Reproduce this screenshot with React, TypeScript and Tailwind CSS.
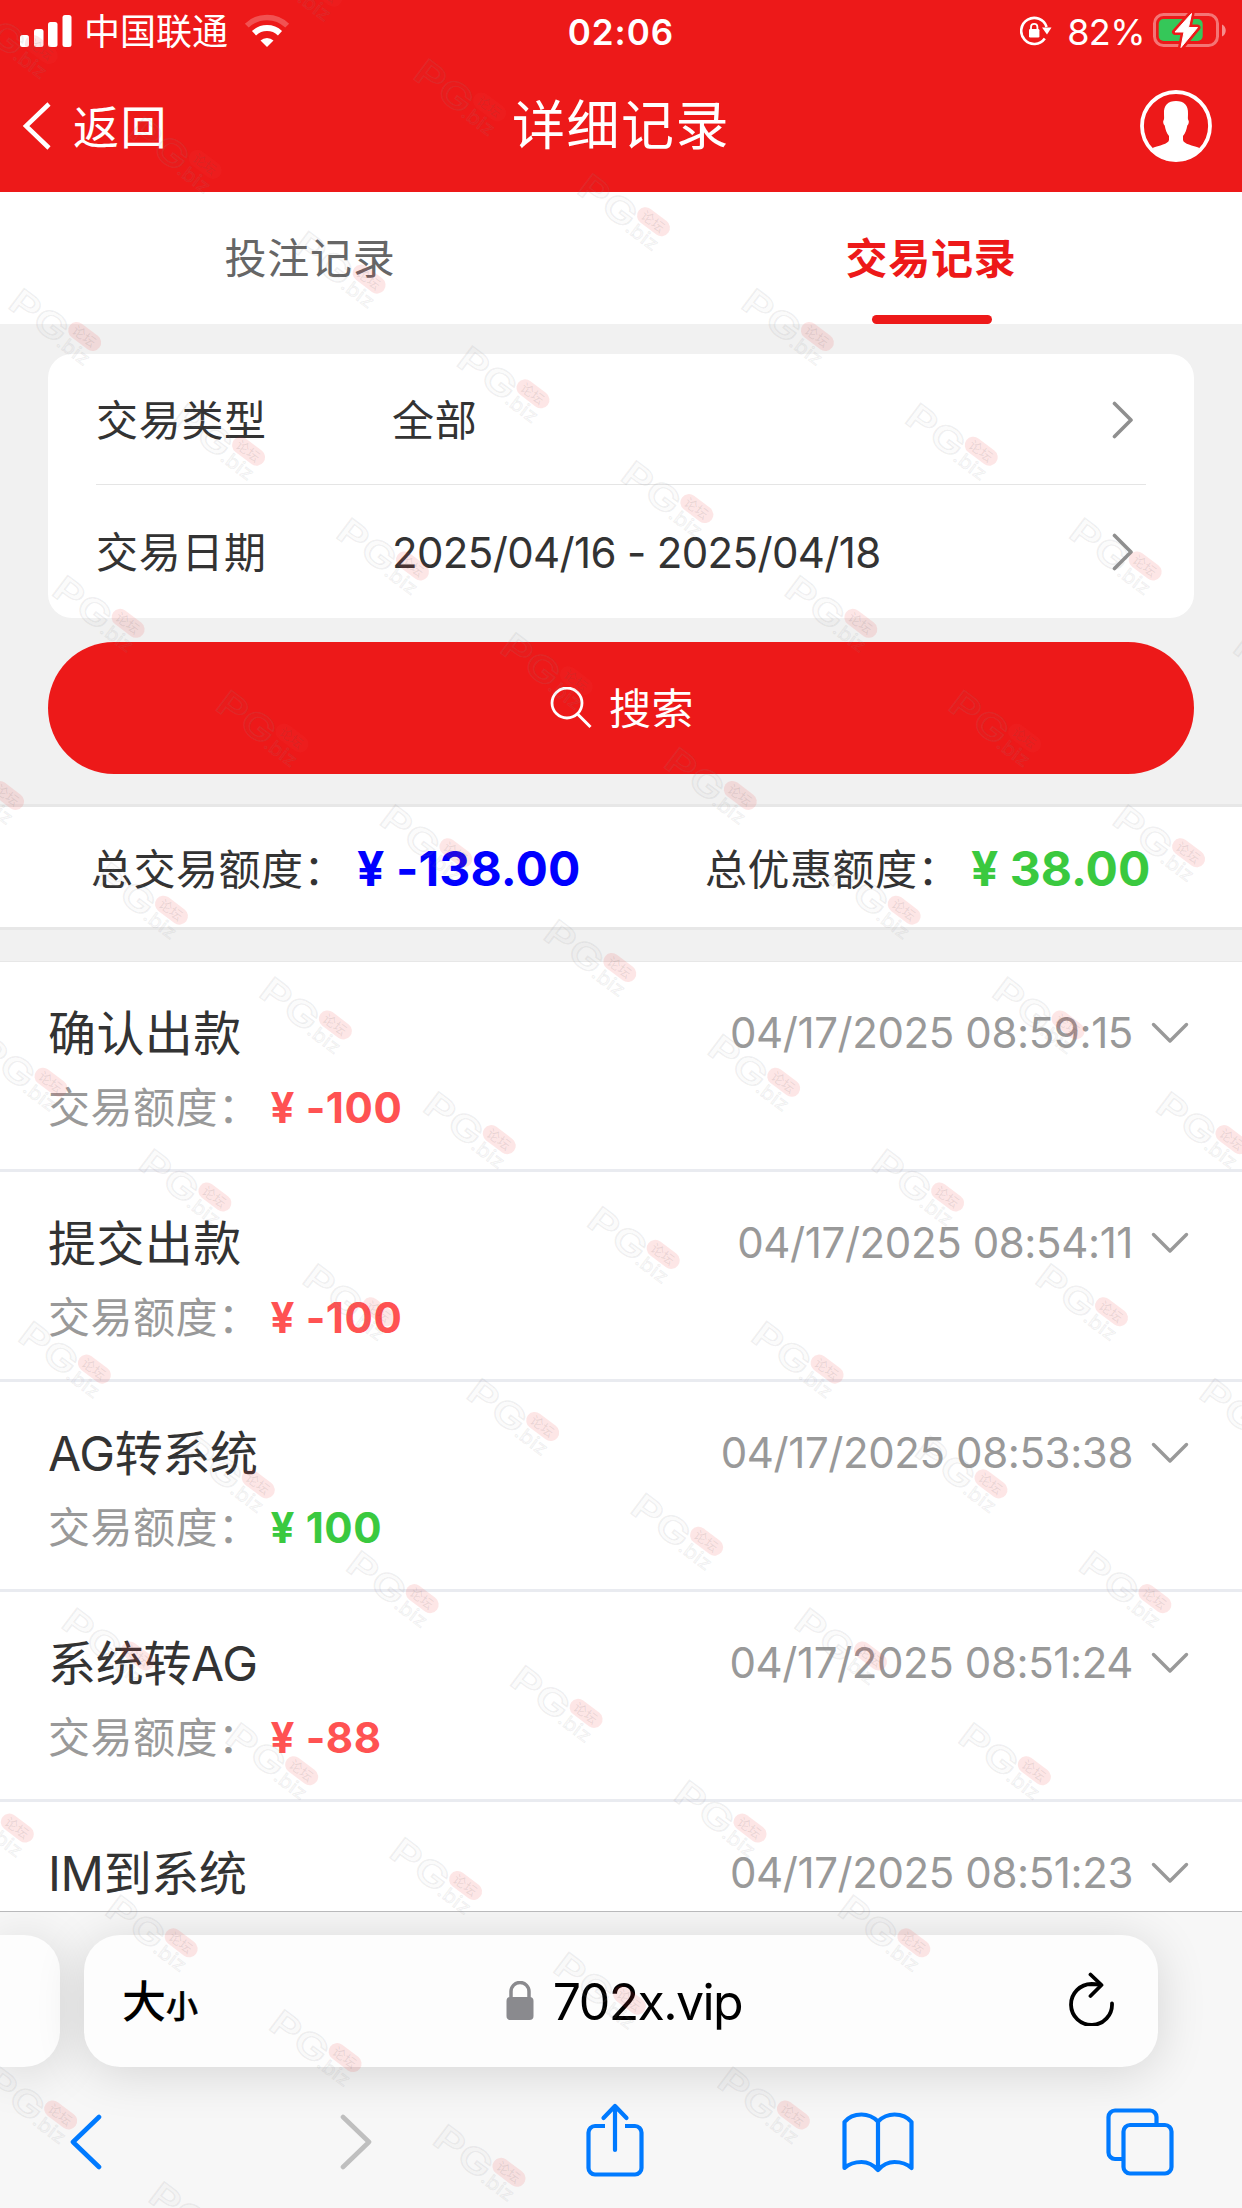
import React from "react";

type Tone = "red" | "green";

type RecordItem = {
  title: string;
  time: string;
  amount: string;
  tone: Tone;
};

const records: RecordItem[] = [
  { title: "确认出款", time: "04/17/2025 08:59:15", amount: "-100", tone: "red" },
  { title: "提交出款", time: "04/17/2025 08:54:11", amount: "-100", tone: "red" },
  { title: "AG转系统", time: "04/17/2025 08:53:38", amount: "100", tone: "green" },
  { title: "系统转AG", time: "04/17/2025 08:51:24", amount: "-88", tone: "red" },
  { title: "IM到系统", time: "04/17/2025 08:51:23", amount: "-100", tone: "red" },
];

function SignalIcon() {
  return (
    <svg width="52" height="34" viewBox="0 0 52 34" fill="#fff">
      <rect x="0" y="21" width="9" height="12" rx="2.5" />
      <rect x="14" y="15" width="9.5" height="18" rx="2.5" />
      <rect x="28" y="8" width="9.5" height="25" rx="2.5" />
      <rect x="42.5" y="1" width="9" height="32" rx="2.5" />
    </svg>
  );
}

function WifiIcon() {
  return (
    <svg width="46" height="34" viewBox="0 0 46 34" fill="none">
      <path d="M2.8 11.6 A29 29 0 0 1 43.2 11.6" stroke="#fff" strokeOpacity="0.25" strokeWidth="5.5" />
      <path d="M10 19.2 A19 19 0 0 1 36 19.2" stroke="#fff" strokeWidth="6" />
      <path d="M23 33 L16.5 26.500 A9.500 9.500 0 0 1 29.500 26.500 Z" fill="#fff" />
    </svg>
  );
}

function RotationLockIcon() {
  return (
    <svg width="32" height="30" viewBox="0 0 32 30" fill="none">
      <path d="M24.800 22.500 A13 13 0 1 1 26.600 11" stroke="#fff" strokeWidth="2.600" />
      <path d="M22 11.500 H31.500 L27 18.500 Z" fill="#fff" />
      <rect x="9" y="13" width="10.400" height="8.500" rx="1.200" fill="#fff" />
      <path d="M11 13.500 V11 A3.200 3.200 0 0 1 17.400 11 V13.500" stroke="#fff" strokeWidth="1.800" />
    </svg>
  );
}

function BatteryIcon() {
  return (
    <svg width="74" height="36" viewBox="0 0 74 36" fill="none">
      <rect x="1.500" y="1.500" width="63" height="31" rx="9" stroke="#fff" strokeOpacity="0.4" strokeWidth="3" />
      <path d="M69 11.500 C74 13.500 74 21.500 69 23.500 Z" fill="#fff" fillOpacity="0.5" />
      <rect x="5.700" y="6" width="44" height="22" rx="5" fill="#35c759" />
      <path d="M38.500 0.500 L22 19 H31 L28 34.500 L44.500 14.500 H35.500 Z" fill="#fff" stroke="#ed1919" strokeWidth="6" strokeLinejoin="round" />
      <path d="M38.500 0.500 L22 19 H31 L28 34.500 L44.500 14.500 H35.500 Z" fill="#fff" stroke="#fff" strokeWidth="1" strokeLinejoin="round" />
    </svg>
  );
}

function AvatarIcon() {
  return (
    <svg width="72" height="72" viewBox="0 0 72 72" fill="none">
      <circle cx="36" cy="36" r="34" stroke="#fff" strokeWidth="3.800" />
      <path
        d="M36 11 C44 11 48.500 15 48 24 C48 27 47.600 29 48.300 30 C49.500 31.500 48.500 34.500 47.300 35.500 C46.500 40 45.500 43 43 46 V50 C43.500 54 53 55.500 59.500 58 A33 33 0 0 1 46 70.500 H26 A33 33 0 0 1 12.500 58 C19 55.500 28.500 54 29 50 V46 C26.500 43 25.500 40 24.700 35.500 C23.500 34.500 22.500 31.500 23.700 30 C24.400 29 24 27 24 24 C23.500 15 28 11 36 11 Z"
        fill="#fff"
      />
    </svg>
  );
}

function Chevron({ dir, color }: { dir: "right" | "down"; color: string }) {
  return dir === "right" ? (
    <svg width="22" height="38" viewBox="0 0 22 38" fill="none">
      <path d="M2.500 2.500 L19 19 L2.500 35.500" stroke={color} strokeWidth="3.600" strokeLinecap="round" strokeLinejoin="round" />
    </svg>
  ) : (
    <svg width="38" height="22" viewBox="0 0 38 22" fill="none">
      <path d="M2.500 2.500 L19 19 L35.500 2.500" stroke={color} strokeWidth="3.400" strokeLinecap="round" strokeLinejoin="round" />
    </svg>
  );
}

function StatusBar() {
  return (
    <div className="mb-0.5 grid h-[62px] grid-cols-3 items-center px-5 text-white">
      <div className="flex items-center">
        <SignalIcon />
        <span className="ml-3 pt-0.5 text-[36px] leading-[50px]">中国联通</span>
        <span className="ml-4 flex">
          <WifiIcon />
        </span>
      </div>
      <div className="pt-0.5 text-center text-[35px] font-semibold leading-[50px] tracking-[1px]">02:06</div>
      <div className="-mr-[5px] flex items-center justify-end">
        <RotationLockIcon />
        <span className="ml-[15px] mr-2 pt-0.5 text-[36px] leading-[50px] tracking-[-0.6px]">82%</span>
        <BatteryIcon />
      </div>
    </div>
  );
}

function Header() {
  return (
    <header className="h-48 bg-[#ed1919]">
      <StatusBar />
      <div className="grid h-[124px] grid-cols-3 items-center px-[22px] text-white">
        <div className="flex items-center">
          <svg width="30" height="50" viewBox="0 0 30 50" fill="none">
            <path d="M27 3 L4 25 L27 47" stroke="#fff" strokeWidth="4.500" />
          </svg>
          <span className="ml-[21px] pt-0.5 text-[46px] leading-[60px] tracking-[1.5px]">返回</span>
        </div>
        <h1 className="text-center text-[53px] leading-[70px] tracking-[1.5px]">详细记录</h1>
        <div className="mr-2 flex justify-end">
          <AvatarIcon />
        </div>
      </div>
    </header>
  );
}

function Tabs() {
  return (
    <nav className="grid h-[132px] grid-cols-2 bg-white text-[42px] leading-[60px] tracking-[0.7px]">
      <div className="flex items-center justify-center pr-px pt-0.5 text-[#666666]">投注记录</div>
      <div className="flex flex-col items-center justify-between pt-[37px]">
        <span className="pr-px font-bold text-[#ed1919]">交易记录</span>
        <span className="h-[9px] w-[120px] rounded-full bg-[#ed1919]" />
      </div>
    </nav>
  );
}

function FilterRow({ label, value, spacing }: { label: string; value: string; spacing: string }) {
  return (
    <div className="flex h-[131px] items-center">
      <span className="w-[296px] pt-0.5 tracking-[0.7px]">{label}</span>
      <span className={spacing}>{value}</span>
      <span className="ml-auto mr-3">
        <Chevron dir="right" color="#8f8f8f" />
      </span>
    </div>
  );
}

function Filters() {
  return (
    <section className="h-[480px] bg-[#f1f1f1] px-12 pt-[30px]">
      <div className="h-[264px] rounded-3xl bg-white px-12 text-[42px] leading-[60px] text-[#333333]">
        <FilterRow label="交易类型" value="全部" spacing="pt-0.5 tracking-[0.7px]" />
        <div className="-mt-px mb-px h-px bg-[#e5e5e5]" />
        <FilterRow label="交易日期" value="2025/04/16 - 2025/04/18" spacing="pt-0.5 tracking-[-0.65px]" />
      </div>
      <button className="mt-6 flex h-[132px] w-full items-center justify-center rounded-full bg-[#ed1919] pl-0.5 text-[42px] leading-[60px] text-white">
        <svg width="42" height="42" viewBox="0 0 42 42" fill="none">
          <circle cx="17" cy="16" r="15" stroke="#fff" strokeWidth="2.800" />
          <path d="M27.500 27 L40.500 40" stroke="#fff" strokeWidth="3" />
        </svg>
        <span className="ml-[17px] pt-0.5 tracking-[0.5px]">搜索</span>
      </button>
    </section>
  );
}

function Summary() {
  return (
    <section className="grid h-[126px] grid-cols-2 border-y-[3px] border-[#e7e7e7] bg-white text-[42px] leading-[60px] text-[#333333]">
      <div className="flex items-center pl-[91px] pt-1.5">
        <span className="tracking-[0.5px]">总交易额度：</span>
        <span className="ml-[11px] pb-0.5 text-[48px] font-bold tracking-[0.1px] text-[#0000ff]">¥ -138.00</span>
      </div>
      <div className="flex items-center pl-[84px] pt-1.5">
        <span className="tracking-[0.5px]">总优惠额度：</span>
        <span className="ml-[11px] pb-0.5 text-[48px] font-bold text-[#3ac93f]">¥ 38.00</span>
      </div>
    </section>
  );
}

function RecordRow({ item }: { item: RecordItem }) {
  const hasLatin = /[A-Z]/.test(item.title);
  return (
    <li className="h-[210px] border-b-[3px] border-[#e9ebf0] px-12 pt-9">
      <div className="flex h-[70px] items-center justify-between">
        <span
          className={
            hasLatin
              ? "pt-0.5 text-[48px] leading-[70px] tracking-[-0.3px] text-[#333333]"
              : "pt-0.5 text-[48px] leading-[70px] tracking-[0.4px] text-[#333333]"
          }
        >
          {item.title}
        </span>
        <span className="flex items-center gap-[18px] pr-[5px]">
          <span className="text-[42px] leading-[60px] tracking-[-0.4px] text-[#999999]">{item.time}</span>
          <Chevron dir="down" color="#999999" />
        </span>
      </div>
      <div className="mt-1.5 flex items-center text-[42px] leading-[66px]">
        <span className="pt-px tracking-[0.5px] text-[#999999]">交易额度：</span>
        <span
          className={
            item.tone === "red"
              ? "ml-2.5 font-bold tracking-[0.6px] text-[#ff5252]"
              : "ml-2.5 font-bold tracking-[0.6px] text-[#3ac93f]"
          }
        >
          ¥ {item.amount}
        </span>
      </div>
    </li>
  );
}

function BrowserBar() {
  return (
    <footer className="h-[297px] overflow-hidden border-t border-[#b9b9bb] bg-[#f7f7f7]">
      <div className="mt-[23px] flex gap-6">
        <div className="h-[132px] w-[60px] rounded-r-[36px] bg-[#fdfdfd] shadow-[0_6px_50px_rgba(0,0,0,0.14)]" />
        <div className="grid h-[132px] w-[1074px] grid-cols-[1fr_auto_1fr] items-center rounded-[36px] bg-[#fdfdfd] px-[38px] text-black shadow-[0_6px_50px_rgba(0,0,0,0.14)]">
          <div className="flex items-baseline pt-1.5 font-medium leading-[60px]">
            <span className="text-[44px]">大</span>
            <span className="text-[32px] [-webkit-text-stroke:0.5px_#000]">小</span>
          </div>
          <div className="flex items-center pl-1.5">
            <svg width="28" height="40" viewBox="0 0 28 40" fill="none">
              <rect x="0.500" y="16" width="27" height="23" rx="4" fill="#8a8a8e" />
              <path d="M5 18 V10.500 A9 9 0 0 1 23 10.500 V18" stroke="#8a8a8e" strokeWidth="3.500" />
            </svg>
            <span className="ml-[19px] pt-0.5 text-[50px] leading-[66px] tracking-[-1.6px]">702x.vip</span>
          </div>
          <div className="flex justify-end pb-1 pr-[5px]">
            <svg width="46" height="54" viewBox="0 0 46 54" fill="none" stroke="#000" strokeWidth="3.800" strokeLinecap="round" strokeLinejoin="round">
              <path d="M43 31.500 A20.500 20.500 0 1 1 22.500 12 L31 12.500" />
              <path d="M21.500 2.500 L32.500 13 L21.500 24" />
            </svg>
          </div>
        </div>
      </div>
      <div className="flex h-[140px] items-center pl-[69px] pt-2.5">
        <svg width="34" height="56" viewBox="0 0 34 56" fill="none">
          <path d="M30 3 L4 28 L30 53" stroke="#007aff" strokeWidth="4.600" strokeLinecap="round" strokeLinejoin="round" />
        </svg>
        <svg className="ml-[236px]" width="34" height="56" viewBox="0 0 34 56" fill="none">
          <path d="M4 3 L30 28 L4 53" stroke="#bfbfbf" strokeWidth="4.600" strokeLinecap="round" strokeLinejoin="round" />
        </svg>
        <svg className="mb-1 ml-[213px]" width="58" height="74" viewBox="0 0 58 74" fill="none" stroke="#007aff" strokeWidth="4.200">
          <path d="M19 23 H9 A6.500 6.500 0 0 0 2.500 29.500 V65 A6.500 6.500 0 0 0 9 71.500 H49 A6.500 6.500 0 0 0 55.500 65 V29.500 A6.500 6.500 0 0 0 49 23 H39" />
          <path d="M29 3 V47 M17.500 15 L29 3 L40.500 15" strokeLinecap="round" strokeLinejoin="round" />
        </svg>
        <svg className="ml-[198px]" width="72" height="62" viewBox="0 0 72 62" fill="none" stroke="#007aff" strokeWidth="4.200" strokeLinejoin="round">
          <path d="M36 10.500 C31 5.500 26 3.500 19.500 3.500 S7 5.500 2.500 11 V57 C7 53 13 51 19.500 51 S31 53.500 36 59 C41 53.500 46 51 52.500 51 S65 53 69.500 57 V11 C65 5.500 59 3.500 52.500 3.500 S41 5.500 36 10.500 Z M36 10.500 V58" />
        </svg>
        <svg className="ml-[192px]" width="68" height="68" viewBox="0 0 68 68" fill="none" stroke="#007aff" strokeWidth="4.200">
          <path d="M17 51 H9 A6.500 6.500 0 0 1 2.500 44.500 V9 A6.500 6.500 0 0 1 9 2.500 H44 A6.500 6.500 0 0 1 50.500 9 V16" />
          <rect x="17.500" y="17" width="48" height="48.500" rx="6.500" />
        </svg>
      </div>
    </footer>
  );
}

/* Rotated lattice of forum stamps laid over the whole page. */
function stampPositions() {
  const list: { x: number; y: number }[] = [];
  for (let row = -7; row <= 32; row++) {
    const y = 343 + row * 57.37;
    const base = (((473 - 284.4 * row) % 732.7) + 732.7) % 732.7;
    for (const x of [base - 732.7, base, base + 732.7]) {
      const inside = x > -110 && x < 1262;
      if (inside && y - 0.7 * x > -400 && 172 * x + 120 * y < 395000) list.push({ x, y });
    }
  }
  return list;
}

function Stamps() {
  return (
    <svg className="pointer-events-none absolute inset-0" width="1242" height="2208" viewBox="0 0 1242 2208">
      {stampPositions().map((p, i) => (
        <g key={i} transform={`translate(${p.x - 2} ${p.y + 1}) rotate(37)`}>
          <g fontFamily="Inter, sans-serif" fill="#8a8a90" fillOpacity="0.03" stroke="#8a8a90" strokeOpacity="0.14">
            <text x="-1" y="26" fontSize="35" fontWeight="600" strokeWidth="1.200" textLength="64" lengthAdjust="spacingAndGlyphs">
              PG
            </text>
            <text x="61" y="27" fontSize="19" fontWeight="400" strokeWidth="0.800" textLength="36" lengthAdjust="spacingAndGlyphs">
              .biz
            </text>
          </g>
          <rect x="61" y="-6" width="37" height="17" rx="8.500" fill="#f04040" fillOpacity="0.13" />
          <text x="66" y="7.500" fontSize="13" fontFamily="Noto Sans CJK SC, sans-serif" fill="#555" fillOpacity="0.12">
            论坛
          </text>
        </g>
      ))}
    </svg>
  );
}

export default function App() {
  return (
    <div className="relative flex h-[2208px] w-[1242px] flex-col overflow-hidden bg-white font-[Inter,'Noto_Sans_CJK_SC',sans-serif]">
      <Header />
      <Tabs />
      <Filters />
      <Summary />
      <div className="h-8 shrink-0 border-b border-[#e7e7e7] bg-[#f1f1f1]" />
      <ul className="h-[949px] overflow-hidden">
        {records.map((item) => (
          <RecordRow key={item.time} item={item} />
        ))}
      </ul>
      <BrowserBar />
      <Stamps />
    </div>
  );
}
